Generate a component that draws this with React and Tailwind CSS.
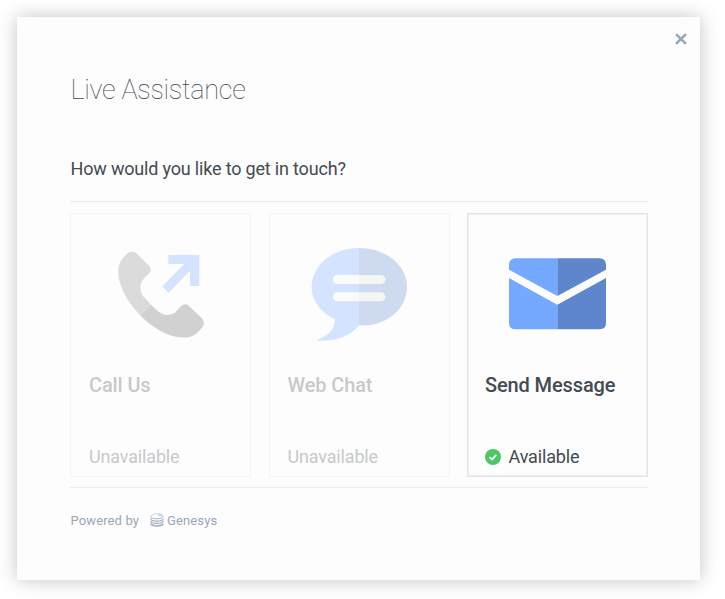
function PhoneIcon() {
  return (
    <svg viewBox="154 165 300 300" className="h-[100px] w-[100px]">
      <path
        fill="#dbdbdb"
        d="M204 190 Q217 180 230 190 L269 228 Q278 240 269 250 L254 264 Q233 289 249 317 L274 344 L241 376 Q196 329 180 276 Q170 235 184 212 Q192 200 204 190Z"
      />
      <path
        fill="#d1d1d1"
        d="M274 344 L295 364 Q318 383 345 369 L364 349 Q375 338 387 347 L427 385 Q438 398 428 411 Q412 434 393 440 Q352 450 304 424 Q272 407 241 376Z"
      />
      <path fill="#d4e3ff" d="M326 195H419V288H391V242L327 308L308 289L374 222H326Z" />
    </svg>
  );
}

function ChatIcon() {
  return (
    <svg viewBox="147 165 300 300" className="h-[100px] w-[100px]">
      <path
        fill="#d4e3ff"
        d="M297 174 C218 174 155 226 155 291 C155 332 182 368 225 388 Q224 434 165 452 Q255 458 297 406Z"
      />
      <path fill="#cedaf0" d="M297 174 C378 174 441 226 441 291 C441 356 378 412 297 406Z" />
      <path fill="#fbfbfb" d="M297 255H232a13 13 0 0 0 0 27H297ZM297 307H232a13 13 0 0 0 0 27H297Z" />
      <path fill="#f4f5f5" d="M297 255H363a13 13 0 0 1 0 27H297ZM297 307H363a13 13 0 0 1 0 27H297Z" />
    </svg>
  );
}

function MailIcon() {
  return (
    <svg viewBox="159 165 300 300" className="h-[100px] w-[100px]">
      <path fill="#75a8ff" d="M307 205H180Q162 207 162 225V239L307 318ZM162 264L307 344V418H180Q162 416 162 399Z" />
      <path fill="#5e86cc" d="M307 205H435Q453 207 453 225V239L307 318ZM453 264L307 344V418H435Q453 416 453 399Z" />
    </svg>
  );
}

function GenesysLogo() {
  return (
    <svg viewBox="0 0 14 14" className="relative -top-px mr-[3px] ml-[11px] h-[14px] w-[14px]" fill="none" stroke="#a0adbd">
      <path strokeWidth="0.5" d="M1 3.5C1 .5 9 .2 12 1.2" />
      <path strokeWidth="0.9" d="M.8 3.5C.8 6.4 13 6.6 13 3.5C13 2.5 11 2 8 2" />
      <path strokeWidth="1.2" d="M.7 5.5C1 9 13 9 13.2 5.5M.7 8C1 11.2 13 11.2 13.2 8" />
      <path strokeWidth="1.5" d="M.8 10.5C1.5 13.7 12.5 13.7 13.2 10.5" />
    </svg>
  );
}

const channels = [
  { name: 'Call Us', icon: PhoneIcon, available: false },
  { name: 'Web Chat', icon: ChatIcon, available: false },
  { name: 'Send Message', icon: MailIcon, available: true },
];

function ChannelCard({ channel }) {
  const Icon = channel.icon;
  return (
    <button
      disabled={!channel.available}
      className={`flex h-[264px] w-[181px] flex-col border text-left ${
        channel.available
          ? 'border-[#dfe4eb] pl-[17px] text-[#444a52] outline outline-[#eef1f5] -outline-offset-2'
          : 'border-[#f2f4f5] pl-[18px] text-[#c8c9cb]'
      }`}
    >
      <div className={`mt-[31px] flex w-[179px] justify-center ${channel.available ? '-ml-[17px]' : '-ml-[18px]'}`}>
        <Icon />
      </div>
      <div className="mt-[26px] text-[20px] leading-[28px] font-medium tracking-[-0.12px] whitespace-nowrap">
        {channel.name}
      </div>
      <div className="mt-[45px] flex items-center text-[18px] leading-[26px] tracking-[-0.16px]">
        {channel.available && (
          <svg viewBox="0 0 16 16" className="mr-[7.5px] h-4 w-4">
            <circle cx="8" cy="8" r="8" fill="#4bc764" />
            <path d="M4.6 8.2L7 10.4L11.3 5.8" fill="none" stroke="#fff" strokeWidth="1.8" />
          </svg>
        )}
        {channel.available ? 'Available' : 'Unavailable'}
      </div>
    </button>
  );
}

export default function App() {
  return (
    <div className="h-[599px] w-[725px] overflow-hidden bg-white pt-[17px] pl-[17px] font-['Roboto',sans-serif]">
      <div className="flex h-[563px] w-[683px] flex-col bg-[#fdfdfd] px-[53px] shadow-[0_0_18px_rgba(0,0,0,0.24)]">
        <div className="-mr-[41px] flex h-[44px] items-center justify-end">
          <button aria-label="Close">
            <svg viewBox="0 0 12 12" className="mr-px h-[12px] w-[12px]">
              <path d="M1.8 1.8L10.2 10.2M10.2 1.8L1.8 10.2" stroke="#98a7b8" strokeWidth="2.6" strokeLinecap="round" />
            </svg>
          </button>
        </div>
        <h1 className="mt-[11px] pl-[0.5px] text-[27px] leading-[36px] font-thin tracking-[-0.28px] text-[#444a52]">Live Assistance</h1>
        <h2 className="mt-[48px] pl-[0.5px] text-[18px] leading-[26px] tracking-[-0.18px] text-[#444a52]">
          How would you like to get in touch?
        </h2>
        <div className="mt-[19px] flex h-[287px] w-[578px] items-center justify-between border-y border-[#eaecee]">
          {channels.map((channel) => (
            <ChannelCard key={channel.name} channel={channel} />
          ))}
        </div>
        <div className="mt-[23px] flex items-center pl-[0.5px] text-[13px] leading-[20px] tracking-[0.12px] text-[#98a7b8]">
          Powered by
          <GenesysLogo />
          Genesys
        </div>
      </div>
    </div>
  );
}
